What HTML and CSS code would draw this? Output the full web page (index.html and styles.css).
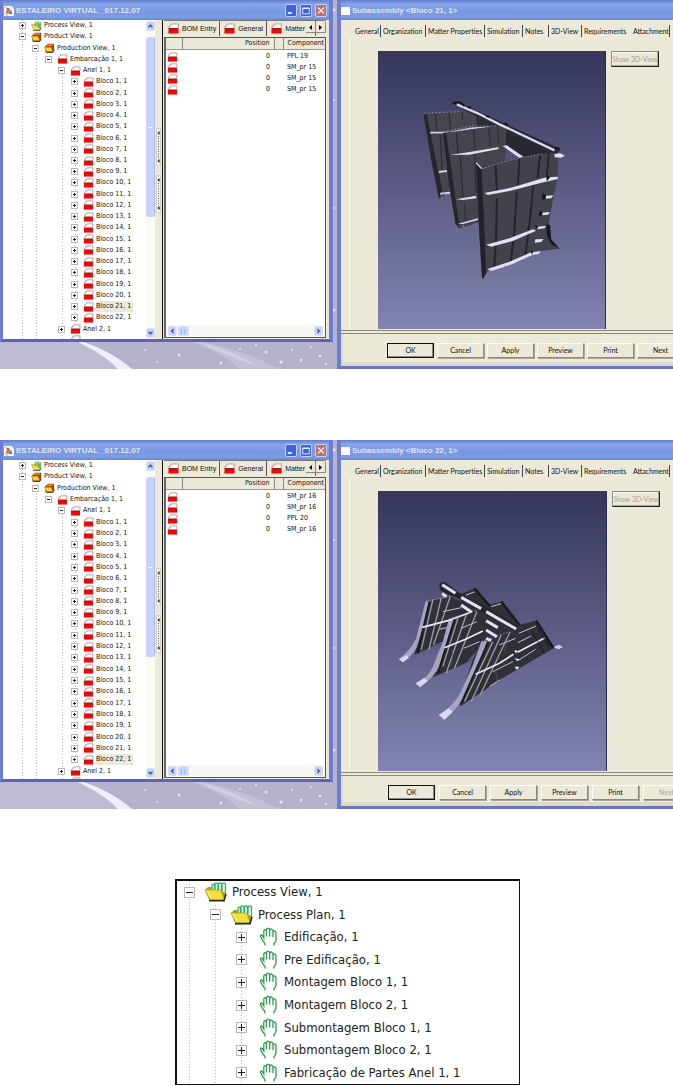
FILE: index.html
```html
<!DOCTYPE html>
<html lang="pt">
<head>
<meta charset="utf-8">
<meta name="viewport" content="width=device-width, initial-scale=1">
<title>Estaleiro Virtual</title>
<link rel="stylesheet" href="styles.css">
</head>
<body>
<svg class="defs" aria-hidden="true">
<defs>
<symbol id="blk" viewBox="0 0 12 12"><path d="M1 6V4L4 1H11V6Z" fill="#fff" stroke="#f0c8c8"/><path d="M.5 5.5 4 1.2" stroke="#e86060" fill="none"/><path d="M4 1H11.5V6" stroke="#9a9a9a" stroke-width=".7" fill="none"/><path d="M.5 6H11.5V11.5H.5Z" fill="#ee0808"/><path d="M1 6H11" stroke="#7c1818"/></symbol>
<symbol id="prd" viewBox="0 0 12 12"><path d="M1 4 4 1H11.5V8L9 11H1Z" fill="#b03808"/><path d="M3 2.5H10" stroke="#ffe060"/><path d="M0 5H8L10 10.5H2.5Z" fill="#ffd83c" stroke="#b07800" stroke-width=".7"/><path d="M2 11.3H10L11.6 8" stroke="#201000" fill="none"/></symbol>
<symbol id="prc" viewBox="0 0 12 12"><path d="M4.5 6V1.5M6.5 6V.5M8.5 7V.5M10.5 8V1.5" stroke="#38a848" stroke-width="1.2"/><path d="M7 3H11V9H7Z" fill="#58b858"/><path d="M0 4H3.500L4 6H8L10 10.500H2.500Z" fill="#f8e048" stroke="#a89020" stroke-width=".7"/><path d="M2 11.300H10L11.600 8" stroke="#205020" fill="none"/></symbol>
<symbol id="open" viewBox="0 0 23 20"><path d="M8 9V3Q9 1 10.500 3V9M11 8V1.500Q12.500 0 14 2V9M14.500 8V1.500Q16 0 17.500 2V10M18 9V1.500Q20 0 21.500 2V13" fill="#d8f8e0" stroke="#38a868" stroke-width="1.200"/><path d="M1 8 4 5 7 5 9 9H17L22 11 20 18H5Z" fill="#a8a018"/><path d="M1 8H15Q17 8 17.500 10L20 17.500H6.500Q5 17 4 14Z" fill="#f4e040" stroke="#b8a818" stroke-width=".8"/><path d="M3 8.500 7 16" stroke="#fff8a0"/><path d="M5 18.800H20L22 12" fill="none" stroke="#282808" stroke-width="1.600"/></symbol>
<symbol id="hand" viewBox="0 0 23 20"><path d="M9 16.500Q6.500 14 5 10.500Q3.800 8.300 5.200 8Q6.500 8 7.500 10.500L7.800 11V4.500Q8 2.500 9.500 2.800Q10.500 3 10.500 4.500V9.500M10.500 4V2.500Q11 1 12.500 1.300Q13.700 1.500 13.700 3V9.500M13.700 3.500Q14 1.800 15.500 2Q17 2.500 17 4V10M17 5Q17.500 3.500 19 4Q20 4.500 20 6V13Q20 15 18 16.500V18.500M9 16.500V18.500" fill="none" stroke="#2c9c4c" stroke-width="1.300"/></symbol>
<symbol id="app" viewBox="0 0 12 12"><path d="M0 0H9L12 3V12H0Z" fill="#f8f8f4"/><path d="M2 2 6 4 3 6 6 9M7 2 4 5 9 6 7 10" fill="none" stroke="#c04838" stroke-width="1.200"/><path d="M2 9 5 7 10 9" fill="none" stroke="#303030"/><path d="M2 10.500H5" stroke="#d8b820" stroke-width="1.500"/></symbol>
<symbol id="grip" viewBox="0 0 5 38"><path d="M.5 .5H4.500V37.500H.5Z" fill="#f6f4e8" stroke="#d4d0bc"/><path d="M2.500 8V31" stroke="#555" stroke-dasharray="1 1.500"/><path d="M3.500 3 1.500 5 3.500 7ZM3.500 31 1.500 33 3.500 35Z" fill="#111"/></symbol>
<symbol id="stars" viewBox="0 0 673 369" preserveAspectRatio="none">
<rect width="673" height="369" fill="#b5b3cb"/>
<path d="M0 335H60Q105 345 128 369H0Z" fill="#bebcd3"/>
<path d="M70 338Q108 348 132 369H118Q104 354 70 338Z" fill="#f0eef6"/>
<path d="M180 338Q230 344 280 369H240Q220 350 180 338Z" fill="#c2c0d5"/><path d="M198 342Q230 349 258 366Q228 357 198 342Z" fill="#d2d0e0"/>
<g fill="#e8e6f2"><circle cx="179" cy="355" r="1.500"/><circle cx="221" cy="363" r="1.500"/><circle cx="240" cy="349" r="1"/><circle cx="256" cy="345" r="1"/><circle cx="266" cy="352" r="1.500"/><circle cx="281" cy="362" r="1.500"/><circle cx="292" cy="350" r="1"/><circle cx="301" cy="360" r="1.500"/><circle cx="311" cy="347" r="1"/><circle cx="320" cy="356" r="1.500"/><circle cx="157" cy="362" r="1"/><circle cx="145" cy="350" r="1"/><circle cx="326" cy="364" r="1"/><circle cx="334" cy="310" r="1.500"/><circle cx="334" cy="208" r="1"/><circle cx="334" cy="100" r="1"/><circle cx="334" cy="10" r="1.500"/></g>
</symbol>
</defs>
</svg>

<main class="page">
<section class="desktop">
<svg class="sky" aria-hidden="true"><use href="#stars"/></svg>
<article class="win">
<header class="bar"><svg class="app"><use href="#app"/></svg><h2>ESTALEIRO VIRTUAL _017.12.07</h2>
<div class="ctl"><button aria-label="Minimize"><svg viewBox="0 0 12 12"><path d="M2 9H7" stroke="#fff" stroke-width="2"/></svg></button><button aria-label="Maximize"><svg viewBox="0 0 12 12"><path d="M2 3H10V10H2ZM2 3.500H10" stroke="#fff" fill="none"/></svg></button><button class="close" aria-label="Close"><svg viewBox="0 0 12 12"><path d="M2.500 2.500 9.500 9.500M9.500 2.500 2.500 9.500" stroke="#fff" stroke-width="1.500"/></svg></button></div></header>
<div class="split">
<ul class="tree">
<li class="d0"><button class="t p" aria-label="Expand"></button><svg><use href="#prc"/></svg><span>Process View, 1</span></li>
<li class="d0"><button class="t" aria-label="Collapse"></button><svg><use href="#prd"/></svg><span>Product View, 1</span></li>
<li class="d1"><button class="t" aria-label="Collapse"></button><svg><use href="#prd"/></svg><span>Production View, 1</span></li>
<li class="d2"><button class="t" aria-label="Collapse"></button><svg><use href="#blk"/></svg><span>Embarcação 1, 1</span></li>
<li class="d3"><button class="t" aria-label="Collapse"></button><svg><use href="#blk"/></svg><span>Anel 1, 1</span></li>
<li class="d4"><button class="t p" aria-label="Expand"></button><svg><use href="#blk"/></svg><span>Bloco 1, 1</span></li>
<li class="d4"><button class="t p" aria-label="Expand"></button><svg><use href="#blk"/></svg><span>Bloco 2, 1</span></li>
<li class="d4"><button class="t p" aria-label="Expand"></button><svg><use href="#blk"/></svg><span>Bloco 3, 1</span></li>
<li class="d4"><button class="t p" aria-label="Expand"></button><svg><use href="#blk"/></svg><span>Bloco 4, 1</span></li>
<li class="d4"><button class="t p" aria-label="Expand"></button><svg><use href="#blk"/></svg><span>Bloco 5, 1</span></li>
<li class="d4"><button class="t p" aria-label="Expand"></button><svg><use href="#blk"/></svg><span>Bloco 6, 1</span></li>
<li class="d4"><button class="t p" aria-label="Expand"></button><svg><use href="#blk"/></svg><span>Bloco 7, 1</span></li>
<li class="d4"><button class="t p" aria-label="Expand"></button><svg><use href="#blk"/></svg><span>Bloco 8, 1</span></li>
<li class="d4"><button class="t p" aria-label="Expand"></button><svg><use href="#blk"/></svg><span>Bloco 9, 1</span></li>
<li class="d4"><button class="t p" aria-label="Expand"></button><svg><use href="#blk"/></svg><span>Bloco 10, 1</span></li>
<li class="d4"><button class="t p" aria-label="Expand"></button><svg><use href="#blk"/></svg><span>Bloco 11, 1</span></li>
<li class="d4"><button class="t p" aria-label="Expand"></button><svg><use href="#blk"/></svg><span>Bloco 12, 1</span></li>
<li class="d4"><button class="t p" aria-label="Expand"></button><svg><use href="#blk"/></svg><span>Bloco 13, 1</span></li>
<li class="d4"><button class="t p" aria-label="Expand"></button><svg><use href="#blk"/></svg><span>Bloco 14, 1</span></li>
<li class="d4"><button class="t p" aria-label="Expand"></button><svg><use href="#blk"/></svg><span>Bloco 15, 1</span></li>
<li class="d4"><button class="t p" aria-label="Expand"></button><svg><use href="#blk"/></svg><span>Bloco 16, 1</span></li>
<li class="d4"><button class="t p" aria-label="Expand"></button><svg><use href="#blk"/></svg><span>Bloco 17, 1</span></li>
<li class="d4"><button class="t p" aria-label="Expand"></button><svg><use href="#blk"/></svg><span>Bloco 18, 1</span></li>
<li class="d4"><button class="t p" aria-label="Expand"></button><svg><use href="#blk"/></svg><span>Bloco 19, 1</span></li>
<li class="d4"><button class="t p" aria-label="Expand"></button><svg><use href="#blk"/></svg><span>Bloco 20, 1</span></li>
<li class="d4"><button class="t p" aria-label="Expand"></button><svg><use href="#blk"/></svg><span class="sel">Bloco 21, 1</span></li>
<li class="d4"><button class="t p" aria-label="Expand"></button><svg><use href="#blk"/></svg><span>Bloco 22, 1</span></li>
<li class="d3"><button class="t p" aria-label="Expand"></button><svg><use href="#blk"/></svg><span>Anel 2, 1</span></li>
<li class="d3"><i class="t-gap"></i><svg><use href="#blk"/></svg></li>
</ul>
<div class="vscroll"><button aria-label="Scroll up"><svg viewBox="0 0 9 9"><path d="M2 6 4.500 3.500 7 6" fill="none" stroke="#3c5078" stroke-width="1.700"/></svg></button><div class="thumb"></div><button aria-label="Scroll down"><svg viewBox="0 0 9 9"><path d="M2 3 4.500 5.500 7 3" fill="none" stroke="#3c5078" stroke-width="1.700"/></svg></button></div>
<div class="sash"><svg><use href="#grip"/></svg><svg><use href="#grip"/></svg></div>
<div class="detail">
<div class="dtabs" role="tablist"><button role="tab" aria-selected="true"><svg><use href="#blk"/></svg>BOM Entry</button><button role="tab"><svg><use href="#blk"/></svg>General</button><button role="tab"><svg><use href="#blk"/></svg>Matter P</button><div class="nav"><button aria-label="Previous tabs"><svg viewBox="0 0 7 7"><path d="M5 1 2 3.500 5 6Z"/></svg></button><button aria-label="Next tabs"><svg viewBox="0 0 7 7"><path d="M2 1 5 3.500 2 6Z"/></svg></button></div></div>
<div class="list">
<table><thead><tr><th class="c1"></th><th class="c2">Position</th><th class="c3"></th><th class="c4">Component</th></tr></thead>
<tbody>
<tr><td><svg><use href="#blk"/></svg></td><td class="num">0</td><td></td><td>PPL 19</td></tr>
<tr><td><svg><use href="#blk"/></svg></td><td class="num">0</td><td></td><td>SM_pr 15</td></tr>
<tr><td><svg><use href="#blk"/></svg></td><td class="num">0</td><td></td><td>SM_pr 15</td></tr>
<tr><td><svg><use href="#blk"/></svg></td><td class="num">0</td><td></td><td>SM_pr 15</td></tr>
</tbody></table>
<div class="hscroll"><button aria-label="Scroll left"><svg viewBox="0 0 9 9"><path d="M6 2 3.500 4.500 6 7" fill="none" stroke="#3c5078" stroke-width="1.700"/></svg></button><div class="hthumb"></div><button aria-label="Scroll right"><svg viewBox="0 0 9 9"><path d="M3 2 5.500 4.500 3 7" fill="none" stroke="#3c5078" stroke-width="1.700"/></svg></button></div>
</div>
</div>
</div>
</article>
<article class="dlg">
<header class="bar"><i class="doc"></i><h2>Subassembly &lt;Bloco 21, 1&gt;</h2></header>
<div class="tabs" role="tablist"><button role="tab">General</button><button role="tab">Organization</button><button role="tab">Matter Properties</button><button role="tab">Simulation</button><button role="tab">Notes</button><button role="tab">3D-View</button><button role="tab">Requirements</button><button role="tab" aria-selected="true">Attachment</button></div>
<div class="panel">
<svg class="view" viewBox="0 0 228 278" preserveAspectRatio="xMidYMid slice" role="img" aria-label="3D model of Bloco 21">
<g transform="translate(32 39) scale(.3333)">
<path d="M125 38 148 38 455 178 440 192 345 206 290 175 200 110 200 80Z" fill="#2c2c32"/>
<path d="M45 72 150 65 185 72 205 110 290 108 290 170 240 300 110 312 90 325Z" fill="#46464e"/>
<path d="M42 72 52 72 75 190 102 318 88 325 65 210Z" fill="#26262c"/>
<path d="M78 73 82 125M118 70 124 120M92 130 98 240M158 66 160 90" stroke="#26262c" stroke-width="3"/>
<path d="M62 128 125 127 185 115 240 112" stroke="#d2d2f0" stroke-width="5" fill="none"/><path d="M88 246 112 243M92 311 122 308" stroke="#d2d2f0" stroke-width="6"/>
<path d="M100 128 130 125 240 110 290 110 290 190 240 395 205 398 148 416Z" fill="#44444c"/>
<path d="M100 128 110 130 132 280 150 414 138 402 118 280Z" fill="#25252b"/>
<path d="M140 128 146 190M193 118 196 180M152 195 160 320M196 190 200 310M238 112 243 170M165 340 168 390M264 110 268 160" stroke="#27272d" stroke-width="3"/>
<path d="M122 195 180 186 265 172 268 177 180 194Z" fill="#dcdcf6"/><path d="M140 328 200 317V325L160 330Z" fill="#dcdcf6"/><path d="M145 402 205 385V390L160 402Z" fill="#dcdcf6"/>
<path d="M290 128 430 184 395 192 345 205 330 205 290 172Z" fill="#28282e"/>
<path d="M128 38 148 38 452 177 440 188Z" fill="#29292f"/><path d="M142 43 205 70 270 103 290 112 435 181" fill="none" stroke="#d8d8f4" stroke-width="7"/>
<path d="M130 39 150 36 165 48M175 52 185 52M230 78 240 80M285 100 295 105M435 175 450 175" fill="none" stroke="#17171b" stroke-width="6"/>
<path d="M280 168 292 166 342 200 330 204Z" fill="#e0e0f8"/>
<path d="M200 218 215 230 295 210 395 192 430 188 445 198 445 262 432 320 418 400 425 448 450 476 375 485 330 515 235 542 218 572 210 440Z" fill="#42424a"/>
<path d="M200 220 216 236 224 400 230 550 218 570 210 440Z" fill="#222228"/><path d="M200 218 216 236" stroke="#dcdcf0" stroke-width="4"/>
<path d="M258 222 262 300M262 325 260 440 254 535M330 204 325 290M322 305 314 430 303 520M392 195 384 265M372 285 360 400 347 500M418 188 412 260" stroke="#242429" stroke-width="6" fill="none"/>
<path d="M218 236 295 212 395 192" fill="none" stroke="#aaaab8" stroke-width="2" stroke-dasharray="5 5"/>
<path d="M225 309 310 292 410 262 445 260V267L390 280 300 303 235 315Z" fill="#e0e0fa"/>
<path d="M230 464 300 445 370 418 380 422 310 453 245 470Z" fill="#e0e0fa"/><path d="M234 537 300 515 365 487 375 492 310 522 245 543Z" fill="#e0e0fa"/>
<path d="M435 192 452 190 466 197 455 203 435 202ZM402 318 432 316 425 325 405 326ZM395 368 422 366 416 374 395 376ZM380 411 410 407 405 415 382 418ZM378 448 402 447 395 456 375 458ZM370 487 393 484 388 492 370 494Z" fill="#e0e0fa"/>
<path d="M398 310 410 315 408 328 398 330ZM410 255 422 262 412 274ZM390 363 400 367 397 378 388 376ZM376 405 386 410 382 420ZM362 480 370 485 368 495Z" fill="#15151a"/>
<path d="M410 403 422 405 425 448 450 476 425 462 412 435Z" fill="#18181d"/><path d="M160 405 166 418 M195 398 198 408M212 555 220 573M240 545 244 555M288 527 292 542M330 514 334 525M95 312 97 325M104 310 110 320" stroke="#77778c" stroke-width="4"/>
<path d="M45 70 75 68 150 65M102 126 185 108 260 108" fill="none" stroke="#aeaec0" stroke-width="2" stroke-dasharray="5 6"/>
</g></svg>
<button class="show" disabled>Show 3D-View</button>
</div>
<footer class="acts"><button class="def">OK</button><button>Cancel</button><button>Apply</button><button>Preview</button><button>Print</button><button>Next</button></footer>
</article>
</section>

<section class="desktop second">
<svg class="sky" aria-hidden="true"><use href="#stars"/></svg>
<article class="win">
<header class="bar"><svg class="app"><use href="#app"/></svg><h2>ESTALEIRO VIRTUAL _017.12.07</h2>
<div class="ctl"><button aria-label="Minimize"><svg viewBox="0 0 12 12"><path d="M2 9H7" stroke="#fff" stroke-width="2"/></svg></button><button aria-label="Maximize"><svg viewBox="0 0 12 12"><path d="M2 3H10V10H2ZM2 3.500H10" stroke="#fff" fill="none"/></svg></button><button class="close" aria-label="Close"><svg viewBox="0 0 12 12"><path d="M2.500 2.500 9.500 9.500M9.500 2.500 2.500 9.500" stroke="#fff" stroke-width="1.500"/></svg></button></div></header>
<div class="split">
<ul class="tree">
<li class="d0"><button class="t p" aria-label="Expand"></button><svg><use href="#prc"/></svg><span>Process View, 1</span></li>
<li class="d0"><button class="t" aria-label="Collapse"></button><svg><use href="#prd"/></svg><span>Product View, 1</span></li>
<li class="d1"><button class="t" aria-label="Collapse"></button><svg><use href="#prd"/></svg><span>Production View, 1</span></li>
<li class="d2"><button class="t" aria-label="Collapse"></button><svg><use href="#blk"/></svg><span>Embarcação 1, 1</span></li>
<li class="d3"><button class="t" aria-label="Collapse"></button><svg><use href="#blk"/></svg><span>Anel 1, 1</span></li>
<li class="d4"><button class="t p" aria-label="Expand"></button><svg><use href="#blk"/></svg><span>Bloco 1, 1</span></li>
<li class="d4"><button class="t p" aria-label="Expand"></button><svg><use href="#blk"/></svg><span>Bloco 2, 1</span></li>
<li class="d4"><button class="t p" aria-label="Expand"></button><svg><use href="#blk"/></svg><span>Bloco 3, 1</span></li>
<li class="d4"><button class="t p" aria-label="Expand"></button><svg><use href="#blk"/></svg><span>Bloco 4, 1</span></li>
<li class="d4"><button class="t p" aria-label="Expand"></button><svg><use href="#blk"/></svg><span>Bloco 5, 1</span></li>
<li class="d4"><button class="t p" aria-label="Expand"></button><svg><use href="#blk"/></svg><span>Bloco 6, 1</span></li>
<li class="d4"><button class="t p" aria-label="Expand"></button><svg><use href="#blk"/></svg><span>Bloco 7, 1</span></li>
<li class="d4"><button class="t p" aria-label="Expand"></button><svg><use href="#blk"/></svg><span>Bloco 8, 1</span></li>
<li class="d4"><button class="t p" aria-label="Expand"></button><svg><use href="#blk"/></svg><span>Bloco 9, 1</span></li>
<li class="d4"><button class="t p" aria-label="Expand"></button><svg><use href="#blk"/></svg><span>Bloco 10, 1</span></li>
<li class="d4"><button class="t p" aria-label="Expand"></button><svg><use href="#blk"/></svg><span>Bloco 11, 1</span></li>
<li class="d4"><button class="t p" aria-label="Expand"></button><svg><use href="#blk"/></svg><span>Bloco 12, 1</span></li>
<li class="d4"><button class="t p" aria-label="Expand"></button><svg><use href="#blk"/></svg><span>Bloco 13, 1</span></li>
<li class="d4"><button class="t p" aria-label="Expand"></button><svg><use href="#blk"/></svg><span>Bloco 14, 1</span></li>
<li class="d4"><button class="t p" aria-label="Expand"></button><svg><use href="#blk"/></svg><span>Bloco 15, 1</span></li>
<li class="d4"><button class="t p" aria-label="Expand"></button><svg><use href="#blk"/></svg><span>Bloco 16, 1</span></li>
<li class="d4"><button class="t p" aria-label="Expand"></button><svg><use href="#blk"/></svg><span>Bloco 17, 1</span></li>
<li class="d4"><button class="t p" aria-label="Expand"></button><svg><use href="#blk"/></svg><span>Bloco 18, 1</span></li>
<li class="d4"><button class="t p" aria-label="Expand"></button><svg><use href="#blk"/></svg><span>Bloco 19, 1</span></li>
<li class="d4"><button class="t p" aria-label="Expand"></button><svg><use href="#blk"/></svg><span>Bloco 20, 1</span></li>
<li class="d4"><button class="t p" aria-label="Expand"></button><svg><use href="#blk"/></svg><span>Bloco 21, 1</span></li>
<li class="d4"><button class="t p" aria-label="Expand"></button><svg><use href="#blk"/></svg><span class="sel">Bloco 22, 1</span></li>
<li class="d3"><button class="t p" aria-label="Expand"></button><svg><use href="#blk"/></svg><span>Anel 2, 1</span></li>
<li class="d3"><i class="t-gap"></i><svg><use href="#blk"/></svg></li>
</ul>
<div class="vscroll"><button aria-label="Scroll up"><svg viewBox="0 0 9 9"><path d="M2 6 4.500 3.500 7 6" fill="none" stroke="#3c5078" stroke-width="1.700"/></svg></button><div class="thumb"></div><button aria-label="Scroll down"><svg viewBox="0 0 9 9"><path d="M2 3 4.500 5.500 7 3" fill="none" stroke="#3c5078" stroke-width="1.700"/></svg></button></div>
<div class="sash"><svg><use href="#grip"/></svg><svg><use href="#grip"/></svg></div>
<div class="detail">
<div class="dtabs" role="tablist"><button role="tab" aria-selected="true"><svg><use href="#blk"/></svg>BOM Entry</button><button role="tab"><svg><use href="#blk"/></svg>General</button><button role="tab"><svg><use href="#blk"/></svg>Matter P</button><div class="nav"><button aria-label="Previous tabs"><svg viewBox="0 0 7 7"><path d="M5 1 2 3.500 5 6Z"/></svg></button><button aria-label="Next tabs"><svg viewBox="0 0 7 7"><path d="M2 1 5 3.500 2 6Z"/></svg></button></div></div>
<div class="list">
<table><thead><tr><th class="c1"></th><th class="c2">Position</th><th class="c3"></th><th class="c4">Component</th></tr></thead>
<tbody>
<tr><td><svg><use href="#blk"/></svg></td><td class="num">0</td><td></td><td>SM_pr 16</td></tr>
<tr><td><svg><use href="#blk"/></svg></td><td class="num">0</td><td></td><td>SM_pr 16</td></tr>
<tr><td><svg><use href="#blk"/></svg></td><td class="num">0</td><td></td><td>PPL 20</td></tr>
<tr><td><svg><use href="#blk"/></svg></td><td class="num">0</td><td></td><td>SM_pr 16</td></tr>
</tbody></table>
<div class="hscroll"><button aria-label="Scroll left"><svg viewBox="0 0 9 9"><path d="M6 2 3.500 4.500 6 7" fill="none" stroke="#3c5078" stroke-width="1.700"/></svg></button><div class="hthumb"></div><button aria-label="Scroll right"><svg viewBox="0 0 9 9"><path d="M3 2 5.500 4.500 3 7" fill="none" stroke="#3c5078" stroke-width="1.700"/></svg></button></div>
</div>
</div>
</div>
</article>
<article class="dlg">
<header class="bar"><i class="doc"></i><h2>Subassembly &lt;Bloco 22, 1&gt;</h2></header>
<div class="tabs" role="tablist"><button role="tab">General</button><button role="tab">Organization</button><button role="tab">Matter Properties</button><button role="tab">Simulation</button><button role="tab">Notes</button><button role="tab">3D-View</button><button role="tab">Requirements</button><button role="tab" aria-selected="true">Attachment</button></div>
<div class="panel">
<svg class="view" viewBox="0 0 229 280" preserveAspectRatio="xMidYMid slice" role="img" aria-label="3D model of Bloco 22">
<g transform="translate(12 79) scale(.3333)">
<path d="M150 40 165 36 215 72 255 55 295 105 335 95 385 165 440 152 492 235 330 330 215 408 205 400 250 270 130 322 180 205 75 255 110 95 185 80 150 60Z" fill="#303036"/>
<path d="M250 270 262 240 225 285 130 325 120 330ZM180 205 165 228 75 255 85 250Z" fill="#5a5a80"/>
<path d="M108 95 120 93 98 180 82 232Q70 255 42 276L28 268Q65 240 80 205Z" fill="#a4a4c4"/>
<path d="M178 148 192 150 165 235 150 290Q130 325 92 350L78 340Q115 325 130 290L160 215Z" fill="#a4a4c4"/>
<path d="M275 215 293 212 258 310 222 385Q195 425 165 449L148 435Q190 410 212 370L250 285Z" fill="#a4a4c4"/>
<path d="M28 268 52 255 58 264 40 277ZM78 340 105 324 115 333 92 351ZM148 435 178 415 190 425 165 449Z" fill="#d8d8f4"/>
<path d="M130 90 95 240M155 85 118 240M182 80 132 225M205 145 160 290M230 135 170 310M262 125 195 295M310 215 225 395M335 195 245 395M362 185 272 375" stroke="#9c9ca8" stroke-width="4" fill="none"/>
<path d="M120 95 84 250M195 150 145 310M295 220 215 400" stroke="#1b1b20" stroke-width="6"/>
<path d="M98 172 175 152 240 128M165 233 230 207 280 183M258 313 330 280 372 253M384 247 465 204" stroke="#e8e8fc" stroke-width="5" fill="none"/>
<path d="M160 125 215 113M150 178 172 173M222 235 270 215M215 175 262 155M310 305 370 275M388 270 438 238M300 350 330 330M330 225 378 205M388 190 440 168M385 218 425 198M230 75 255 66M305 110 338 100" stroke="#c4c4d8" stroke-width="3" fill="none"/>
<path d="M150 40 165 36 200 65 300 115 385 168 380 185 290 132 210 88 155 62Z" fill="#25252a"/>
<path d="M158 44 198 70M215 82 275 116M290 125 380 177M158 70 170 80M215 105 247 127M290 152 325 173M290 180 322 200M290 205 305 212" stroke="#e0e0fa" stroke-width="9"/>
<path d="M255 55 300 108M335 95 390 165M440 152 492 235" stroke="#1a1a1f" stroke-width="8"/><path d="M440 165 480 235M425 180 465 250" stroke="#101015" stroke-width="2"/>
<path d="M492 232 508 224 520 231 508 238Z" fill="#d0d0ee"/><path d="M375 265 390 268 384 274ZM375 290 390 290 382 299ZM375 240 386 243 378 250Z" fill="#f0f0ff"/>
<path d="M110 93 185 78 210 90M178 146 240 128 265 120M275 215 360 185" fill="none" stroke="#c0c0d0" stroke-width="2" stroke-dasharray="5 5"/>
<path d="M318 300 325 340M350 220 345 250M190 240 186 290" stroke="#55555f" stroke-width="2"/>
</g></svg>
<button class="show" disabled>Show 3D-View</button>
</div>
<footer class="acts"><button class="def">OK</button><button>Cancel</button><button>Apply</button><button>Preview</button><button>Print</button><button disabled>Next</button></footer>
</article>
</section>

<section class="plan">
<ul class="big">
<li class="d0"><button class="t" aria-label="Collapse"></button><svg><use href="#open"/></svg><span>Process View, 1</span></li>
<li class="d1"><button class="t" aria-label="Collapse"></button><svg><use href="#open"/></svg><span>Process Plan, 1</span></li>
<li class="d2"><button class="t p" aria-label="Expand"></button><svg><use href="#hand"/></svg><span>Edificação, 1</span></li>
<li class="d2"><button class="t p" aria-label="Expand"></button><svg><use href="#hand"/></svg><span>Pre Edificação, 1</span></li>
<li class="d2"><button class="t p" aria-label="Expand"></button><svg><use href="#hand"/></svg><span>Montagem Bloco 1, 1</span></li>
<li class="d2"><button class="t p" aria-label="Expand"></button><svg><use href="#hand"/></svg><span>Montagem Bloco 2, 1</span></li>
<li class="d2"><button class="t p" aria-label="Expand"></button><svg><use href="#hand"/></svg><span>Submontagem Bloco 1, 1</span></li>
<li class="d2"><button class="t p" aria-label="Expand"></button><svg><use href="#hand"/></svg><span>Submontagem Bloco 2, 1</span></li>
<li class="d2"><button class="t p" aria-label="Expand"></button><svg><use href="#hand"/></svg><span>Fabricação de Partes Anel 1, 1</span></li>
</ul>
</section>
</main>
</body>
</html>
```
FILE: styles.css
```css
* { box-sizing: border-box; }
body { margin: 0; background: #fff; color: #111; font: 7px/11px "DejaVu Sans Condensed", "Liberation Sans", sans-serif; overflow-x: hidden; }
h2, ul { margin: 0; padding: 0; }
ul { list-style: none; }
button { margin: 0; padding: 0; border: 0; background: none; color: inherit; font: inherit; white-space: nowrap; }
svg { display: block; flex: none; }
.defs { position: absolute; width: 0; height: 0; }
.page { display: flex; flex-direction: column; gap: 71px; }

.desktop { position: relative; display: grid; grid-template-columns: 333px minmax(0, 1fr); column-gap: 4px; height: 369px; overflow: hidden; }
.sky { position: absolute; inset: 0; width: 100%; height: 100%; }
.win, .dlg { position: relative; display: flex; flex-direction: column; overflow: hidden; background: #ece9d8; border: solid #6f7cd6; }
.win { border-width: 0 4px 3px 3px; border-bottom-color: #5c62b8; height: 342px; }
.dlg { border-width: 0 0 3px 4px; border-bottom-color: #6c74c0; }

.bar { display: flex; align-items: center; gap: 2px; flex: none; height: 20px; margin: 0 -4px; padding: 1px 4px 0 5px; background: linear-gradient(#5f7fd0, #86a6ea 20%, #7898e2 60%, #7c9ee6 85%, #6a86d4); }
.bar h2 { flex: 1; color: #dde6fa; font: bold 8px/12px "Liberation Sans", sans-serif; white-space: nowrap; }
.app { width: 10px; height: 10px; }
.dlg .bar { padding-left: 4px; }
.doc { width: 9px; height: 8px; background: #fff; }
.ctl { display: flex; gap: 3px; padding-right: 2px; }
.ctl button { width: 12px; height: 13px; border: 1px solid #c4d2f4; border-radius: 2px; background: #3c64dc; }
.ctl svg { width: 100%; height: 100%; }
.ctl .close { background: #c0706c; }

.split { display: grid; grid-template-columns: 143px 9px 7px minmax(0, 1fr); grid-template-rows: minmax(0, 1fr); flex: 1; min-height: 0; overflow: hidden; background: #fff; }
.tree { --dot: repeating-linear-gradient(#b4b4b4 0 1px, transparent 1px 3px); display: grid; grid-template-rows: repeat(29, minmax(0, 1fr)); align-self: start; height: 326px; background: var(--dot) 19px 0 / 1px 100% no-repeat, var(--dot) 33px 24px / 1px 100% no-repeat, var(--dot) 59px 48px / 1px 100% no-repeat, var(--dot) 72px 58px / 1px 245px no-repeat, #fff; }
.second .tree { height: 328px; }
.tree li, .big li { display: flex; align-items: center; white-space: nowrap; min-height: 0; }
.tree li { padding-left: calc(16px + var(--d) * 13px); }
.tree svg { width: 11px; height: 10px; margin: 0 2px 0 5px; }
.t-gap { width: 7px; }
.d0 { --d: 0; } .d1 { --d: 1; } .d2 { --d: 2; } .d3 { --d: 3; } .d4 { --d: 4; }
.t { flex: none; width: 7px; height: 7px; border: 1px solid #b8b8b8; background: linear-gradient(#222, #222) center / 3px 1px no-repeat, #fff; }
.t.p { background: linear-gradient(#222, #222) center / 3px 1px no-repeat, linear-gradient(#222, #222) center / 1px 3px no-repeat, #fff; }
.sel { background: #ece9d8; padding-right: 2px; }

.vscroll { display: flex; flex-direction: column; padding: 1px 0; background: #fbfbf4; }
.vscroll button, .hscroll button { flex: none; width: 9px; height: 10px; border: 1px solid #dbe4fc; border-radius: 2px; background: #c3d3fc; }
.vscroll button svg, .hscroll button svg { width: 100%; height: 100%; }
.vscroll .thumb { height: 180px; margin: 6px 0 auto; border-right: 1px solid #a8bcf0; border-radius: 2px; background: linear-gradient(#fff, #fff) center / 4px 1px no-repeat, #c5d5fd; }
.sash { display: flex; flex-direction: column; align-items: end; gap: 9px; padding: 108px 1px 0 0; background: #ece9d8; }
.sash svg { width: 5px; height: 38px; }

.detail { display: flex; flex-direction: column; min-width: 0; padding: 0 3px 1px 1px; border-left: 1px solid #111; background: #ece9d8; }
.dtabs { display: flex; flex: none; position: relative; height: 17px; overflow: hidden; border-top: 1px solid #777; }
.dtabs > button { display: flex; align-items: center; gap: 3px; flex: none; height: 15px; padding: 0 3px 0 4px; border-right: 1px solid #555; font: 7px/11px "Liberation Sans", sans-serif; }
.dtabs svg { width: 11px; height: 11px; }
.nav { position: absolute; right: 0; top: 1px; display: flex; background: #ece9d8; }
.nav button { width: 10px; height: 11px; padding: 2px 1px; border-right: 1px solid #888; border-bottom: 1px solid #888; }
.nav svg { width: 7px; height: 7px; }
.list { display: flex; flex-direction: column; flex: 1; border: 1px solid #555; border-left: 2px solid #666; background: #fff; }
table { width: 100%; border-collapse: collapse; table-layout: fixed; }
th { height: 11px; padding: 0 4px; background: #ece9d8; border-right: 1px solid #888; border-bottom: 1px solid #999; font-weight: normal; text-align: left; }
td { height: 11px; padding: 0 4px; line-height: 11px; white-space: nowrap; }
tbody::before { content: ""; display: block; height: 1px; }
td:first-child { padding: 0 1px; }
td svg { width: 11px; height: 10px; }
.c1 { width: 16px; } .c2 { width: auto; text-align: right; } .c3 { width: 8px; } .c4 { width: 42px; border-right: 0; }
.num { text-align: right; padding-right: 4px; }
.hscroll { display: flex; margin-top: auto; padding: 1px 2px; background: #f8f8f4; }
.hthumb { width: 11px; margin: 0 auto 0 1px; border: 1px solid #dbe4fc; border-radius: 2px; background: repeating-linear-gradient(90deg, #9cb4ec 0 1px, transparent 1px 3px) center / 5px 5px no-repeat, #c5d5fd; }

.dlg { font-family: Lato, "Liberation Sans", sans-serif; }
.tabs { display: grid; grid-template-columns: 28px 45px 59px 38px 26px 33px 49px 39px; flex: none; height: 18px; padding: 5px 0 0 12px; }
.tabs button { height: 12px; padding-left: 2px; border-right: 1px solid #444; text-align: left; }
.tabs button:nth-child(7) { border-right: 0; }
.panel { display: flex; align-items: flex-start; gap: 5px; flex: none; margin-left: 8px; padding: 13px 0 0 28px; border-left: 1px solid #fbfaf4; height: 292px; }
.view { width: 228px; height: 278px; background: linear-gradient(#35365a, #5c5c86 50%, #8383b2); border-right: 1px solid #2c2c48; }
.show { width: 48px; height: 16px; border: 1px solid; border-color: #888 #222 #222 #888; color: #a5a291; box-shadow: inset -1px -1px #aaa797, inset 1px 1px #fff; }
.acts { display: flex; gap: 3px; flex: 1; align-items: flex-start; padding: 9px 0 0 46px; border-top: 4px double #8c8a7c; box-shadow: inset 2px -4px #dcdccc; }
.acts button { flex: none; width: 47px; height: 15px; border: 1px solid; border-color: #fff #888 #888 #fff; box-shadow: 1px 1px #aaa79a; }
.acts .def { border-color: #111; box-shadow: inset -1px -1px #888; }
.acts button:disabled { color: #b0ad9c; }
.second .panel { height: 294px; }
.second .view { width: 229px; height: 280px; }
.second .acts { gap: 4px; padding-left: 47px; }

.plan { width: 345px; max-width: 100%; margin-left: 26%; margin-top: -1px; border: 2px solid #111; border-width: 2px 1px 1px 2px; overflow: hidden; }
.big { --dot: repeating-linear-gradient(#bbb 0 1px, transparent 1px 3px); display: grid; grid-auto-rows: 1fr; height: 203px; font-size: 13px; line-height: 18px; background: var(--dot) 12px 0 / 1px 100% no-repeat, var(--dot) 38px 24px / 1px 100% no-repeat, var(--dot) 64px 44px / 1px 100% no-repeat, #fff; }
.big li { padding-left: calc(7px + var(--d) * 26px); color: #222; }
.big .t { width: 11px; height: 11px; background-size: 7px 1px; }
.big .t.p { background-size: 7px 1px, 1px 7px, auto; }
.big svg { width: 23px; height: 20px; margin: 0 5px 0 9px; }
```
